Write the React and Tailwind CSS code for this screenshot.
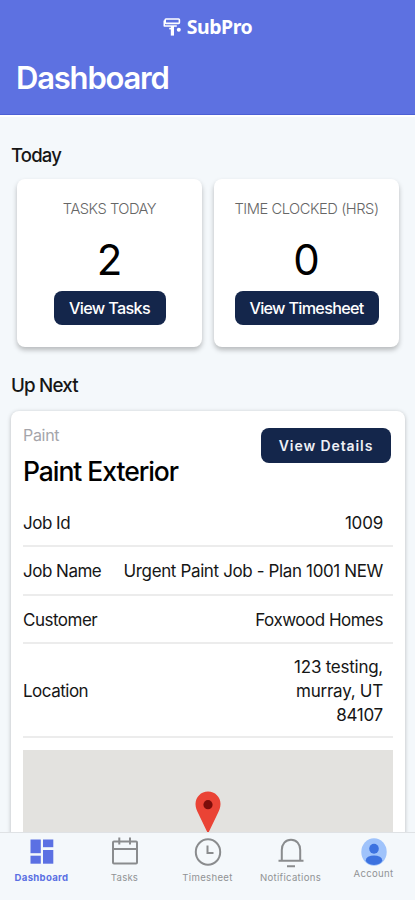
const estatisticas = [
  { id: "tasks", titulo: "TASKS TODAY", valor: 2, botao: "View Tasks", largura: "w-[112px]", espaco: "tracking-[-0.65px]", espacoTitulo: "tracking-[-0.5px]" },
  { id: "timesheet", titulo: "TIME CLOCKED (HRS)", valor: 0, botao: "View Timesheet", largura: "w-[144px]", espaco: "tracking-[-0.7px]", espacoTitulo: "tracking-[-0.45px]" },
];

const detalhes = [
  { rotulo: "Job Id", valor: "1009", altura: "h-[48px]", espaco: "tracking-[-0.2px]" },
  { rotulo: "Job Name", valor: "Urgent Paint Job - Plan 1001 NEW", altura: "h-[49px]", espaco: "tracking-[-0.37px]" },
  { rotulo: "Customer", valor: "Foxwood Homes", altura: "h-[48px]", espaco: "tracking-[-0.5px]" },
  { rotulo: "Location", valor: "123 testing, murray, UT 84107", altura: "h-[94px]", espaco: "tracking-[-0.25px]" },
];

function Logo() {
  return (
    <svg className="w-[19px] h-[20px]" viewBox="0 0 19 20" fill="none" stroke="white" strokeWidth="1.6" strokeLinejoin="round">
      <rect x="2.2" y="2" width="14.2" height="4.4" rx="0.8" />
      <path d="M2.2 4H1.3V9H13.8" />
      <path d="M6.2 11.6H9.2" />
      <path d="M9.4 9V18.6" strokeWidth="3.2" />
      <circle cx="15.8" cy="12.8" r="2" fill="white" stroke="none" />
    </svg>
  );
}

function IconeDashboard() {
  return (
    <svg className="w-6 h-[26px]" viewBox="0 0 24 26" fill="#5b70e3">
      <rect x="0.5" y="0.5" width="10.3" height="13.7" />
      <rect x="13" y="0.5" width="10.3" height="7.7" />
      <rect x="0.5" y="16.7" width="10.3" height="8" />
      <rect x="13" y="11" width="10.3" height="13.7" />
    </svg>
  );
}

function IconeTasks() {
  return (
    <svg className="w-7 h-7" viewBox="0 0 28 28" fill="none" stroke="#8a8c8e" strokeWidth="2">
      <rect x="2" y="4.5" width="24" height="22" rx="1" />
      <path d="M2 12H26M8.3 0.5V7.5M19 0.5V7.5" />
    </svg>
  );
}

function IconeTimesheet() {
  return (
    <svg className="w-7 h-7" viewBox="0 0 28 28" fill="none" stroke="#8a8c8e" strokeWidth="2">
      <ellipse cx="14" cy="14" rx="12.2" ry="12.8" />
      <path d="M13.5 7.5V15H19.5" />
    </svg>
  );
}

function IconeNotifications() {
  return (
    <svg className="w-7 h-[30px]" viewBox="0 0 28 30" fill="none" stroke="#8a8c8e" strokeWidth="2">
      <path d="M4.8 22.3V12C4.8 6 8.5 1.8 14 1.8S23.2 6 23.2 12V22.3" />
      <path d="M1.5 22.8H26.5M10 28.3H18" />
    </svg>
  );
}

function IconeAccount() {
  return (
    <svg className="w-[26px] h-[28px]" viewBox="0 0 26 28">
      <ellipse cx="13" cy="14" rx="12.7" ry="13.7" fill="#9fc3fb" />
      <ellipse cx="13" cy="10.8" rx="4.8" ry="5" fill="#3c72e0" />
      <ellipse cx="13" cy="22.2" rx="8.2" ry="4.8" fill="#3c72e0" />
    </svg>
  );
}

const abas = [
  { nome: "Dashboard", Icone: IconeDashboard, espacoTopo: "pt-[6px]", texto: "mt-[3px] text-[#5b70e3] font-bold tracking-[0.3px]" },
  { nome: "Tasks", Icone: IconeTasks, espacoTopo: "pt-[4px]", texto: "mt-[3px] text-[#919395] tracking-[0.2px]" },
  { nome: "Timesheet", Icone: IconeTimesheet, espacoTopo: "pt-[5px]", texto: "mt-[2px] text-[#919395] tracking-[0.3px]" },
  { nome: "Notifications", Icone: IconeNotifications, espacoTopo: "pt-[5px]", texto: "text-[#919395] tracking-[0.3px]" },
  { nome: "Account", Icone: IconeAccount, espacoTopo: "pt-[5px]", texto: "mt-[-2px] text-[#919395] tracking-[0.3px]" },
];

export default function App() {
  return (
    <div className="w-full h-[900px] flex flex-col overflow-hidden bg-[#f4f8fb] font-['Inter',sans-serif] text-[#161616]">
      <header className="h-[115px] shrink-0 bg-[#5d71e1] border-b border-[#4c60d4] text-white">
        <div className="flex items-center justify-center gap-[5px] pt-[13px]">
          <Logo />
          <span className="font-['Noto_Sans','Open_Sans',sans-serif] font-bold text-[19.5px] leading-[27px] tracking-[-0.5px]">SubPro</span>
        </div>
        <h1 className="ml-[16px] mt-[18px] text-[31px] leading-[40px] font-semibold tracking-[-1.2px]">Dashboard</h1>
      </header>

      <main className="flex-1 min-h-0 overflow-hidden px-[11px] border-t-2 border-white">
        <h2 className="mt-[26px] text-[18.5px] leading-6 font-medium tracking-[-0.8px]">Today</h2>

        <div className="mt-[12px] ml-[6px] mr-[5px] grid grid-cols-2 gap-[12px]">
          {estatisticas.map((item) => (
            <div key={item.id} className="h-[168px] flex flex-col items-center rounded-lg bg-white shadow-[0_3px_5px_rgba(0,0,0,0.25)]">
              <div className={`${item.espacoTitulo} mt-[20px] text-[14.7px] leading-5 font-light text-[#666] whitespace-nowrap`}>{item.titulo}</div>
              <div className="mt-[17px] text-[42px] leading-[48px] text-black">{item.valor}</div>
              <button className={`${item.largura} ${item.espaco} mt-[7px] pt-[1px] h-[34px] rounded-lg bg-[#14264b] text-white text-[16.2px] font-medium whitespace-nowrap`}>
                {item.botao}
              </button>
            </div>
          ))}
        </div>

        <h2 className="mt-[27px] text-[18.8px] leading-6 font-medium tracking-[-0.8px]">Up Next</h2>

        <div className="mt-[13px] mr-[-1px] h-[500px] rounded-lg bg-white shadow-[0_1px_4px_rgba(0,0,0,0.25)] px-[12px]">
          <div className="h-[88px] flex justify-between">
            <div className="pt-[14px]">
              <div className="text-[16px] leading-5 text-[#a5a5aa] tracking-[-0.3px]">Paint</div>
              <div className="mt-[10px] text-[26.5px] leading-8 font-medium text-black tracking-[-1.05px]">Paint Exterior</div>
            </div>
            <button className="mt-[17px] mr-[2px] w-[130px] h-[35px] rounded-lg bg-[#14264b] text-[#eef0f5] text-[14px] font-semibold tracking-[0.9px]">
              View Details
            </button>
          </div>

          {detalhes.map((item) => (
            <div key={item.rotulo} className={`${item.altura} ${item.espaco} flex items-center justify-between border-b-2 border-[#ececec] pr-[10px] pt-[1px] text-[17px] leading-6`}>
              <span className="tracking-[-0.5px]">{item.rotulo}</span>
              <span className={item.rotulo === "Location" ? "w-[100px] text-right" : "text-right whitespace-nowrap"}>{item.valor}</span>
            </div>
          ))}

          <div className="mt-[12px] h-[160px] bg-[#e3e2df] flex justify-center">
            <svg className="mt-[41px] w-[26px] h-[42px]" viewBox="0 0 26 42">
              <path d="M13 0.5C6 0.5 0.5 6 0.5 13C0.5 16.5 1.8 19.5 3.3 22.5L12.2 41H13.8L22.7 22.5C24.2 19.5 25.5 16.5 25.5 13C25.5 6 20 0.5 13 0.5Z" fill="#ea4335" />
              <circle cx="13" cy="13.7" r="4.6" fill="#7b0d0a" />
            </svg>
          </div>
        </div>
      </main>

      <nav className="h-[68px] shrink-0 grid grid-cols-5 bg-[#f4f8fb] border-t border-[#dfe2e5]">
        {abas.map(({ nome, Icone, espacoTopo, texto }) => (
          <div key={nome} className={`${espacoTopo} flex flex-col items-center`}>
            <Icone />
            <span className={`${texto} text-[9.6px] leading-[20px]`}>{nome}</span>
          </div>
        ))}
      </nav>
    </div>
  );
}
